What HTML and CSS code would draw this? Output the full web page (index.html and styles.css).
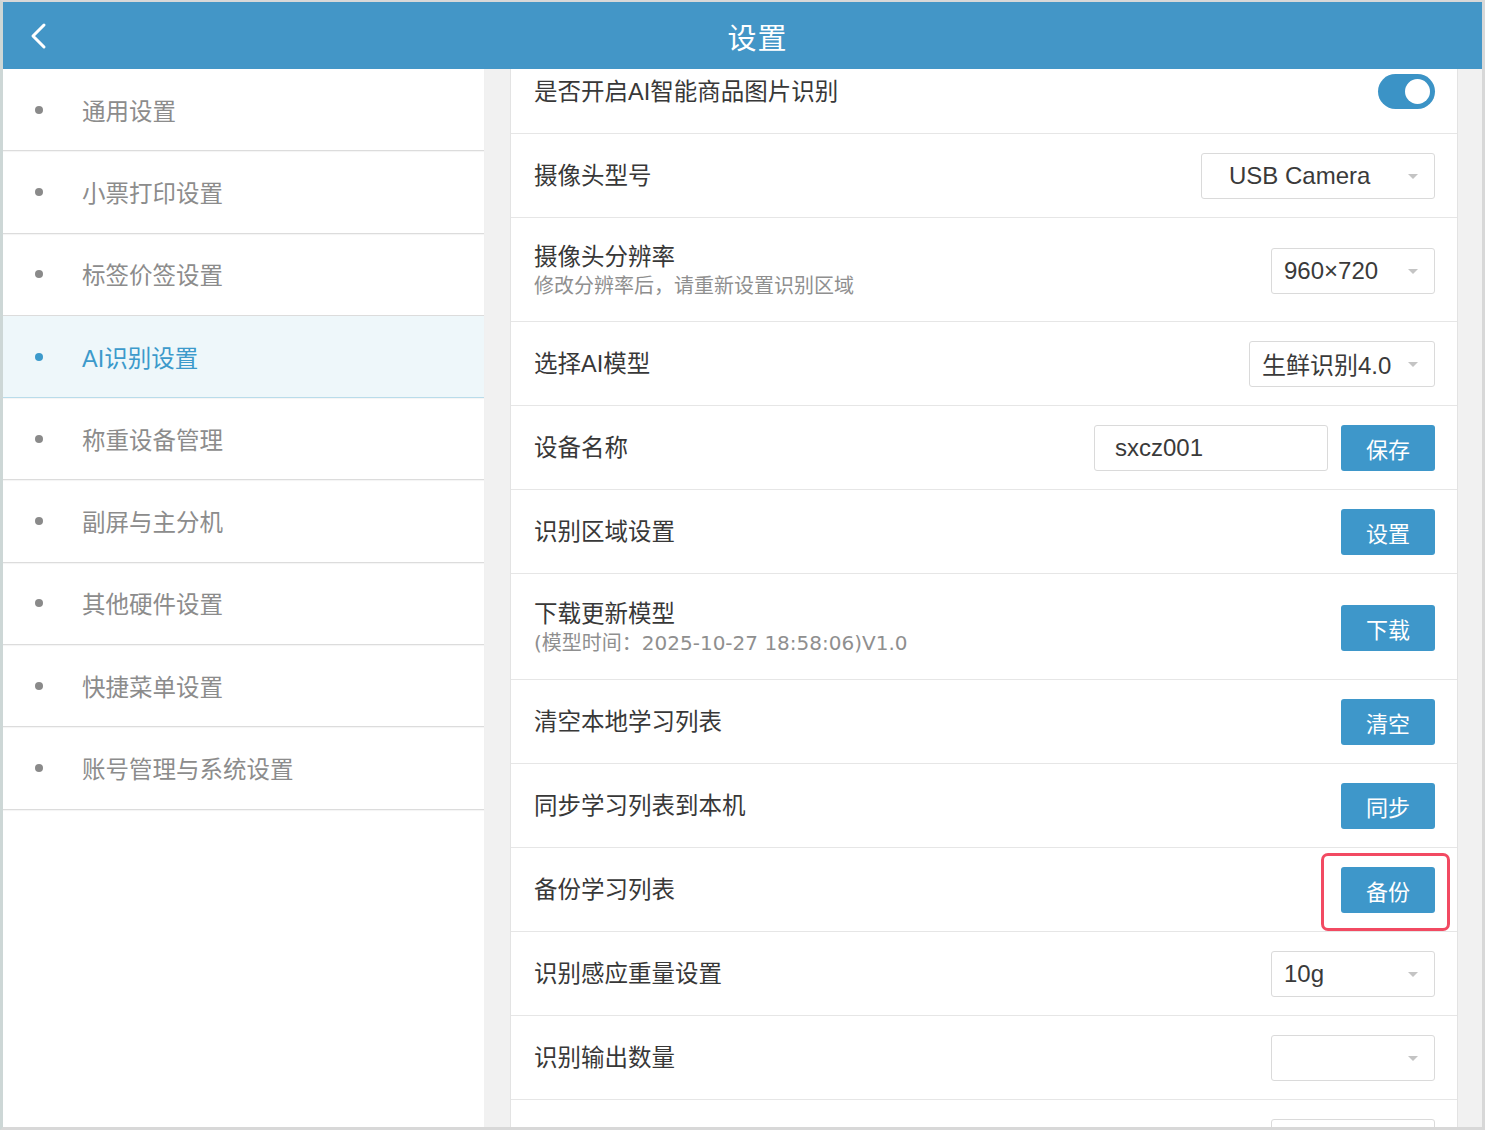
FILE: index.html
```html
<!DOCTYPE html>
<html lang="zh-CN">
<head>
    <meta charset="UTF-8">
    <meta name="viewport" content="width=device-width, initial-scale=1.0">
    <title>设置</title>
    <link rel="stylesheet" href="styles.css">
</head>
<body>
    <div class="frame">
        <header class="topbar">
            <a href="#" class="back">
                <svg width="18" height="28" viewBox="0 0 18 28">
                    <polyline points="15,3 4,14 15,25" fill="none" stroke="#fff" stroke-width="3" stroke-linecap="round" stroke-linejoin="round"/>
                </svg>
            </a>
            <h1>设置</h1>
        </header>

        <div class="main">
            <ul class="side-menu">
                <li><span class="dot"></span>通用设置</li>
                <li><span class="dot"></span>小票打印设置</li>
                <li><span class="dot"></span>标签价签设置</li>
                <li class="active"><span class="dot"></span>AI识别设置</li>
                <li><span class="dot"></span>称重设备管理</li>
                <li><span class="dot"></span>副屏与主分机</li>
                <li><span class="dot"></span>其他硬件设置</li>
                <li><span class="dot"></span>快捷菜单设置</li>
                <li><span class="dot"></span>账号管理与系统设置</li>
            </ul>

            <div class="content">
                <div class="rows">
                    <div class="row">
                        <div class="label">是否开启AI智能商品图片识别</div>
                        <div class="switch on"><span class="knob"></span></div>
                    </div>
                    <div class="row">
                        <div class="label">摄像头型号</div>
                        <div class="select select-wide">USB Camera</div>
                    </div>
                    <div class="row row-two">
                        <div>
                            <div class="label">摄像头分辨率</div>
                            <div class="sub">修改分辨率后，请重新设置识别区域</div>
                        </div>
                        <div class="select">960×720</div>
                    </div>
                    <div class="row">
                        <div class="label">选择AI模型</div>
                        <div class="select select-mid">生鲜识别4.0</div>
                    </div>
                    <div class="row">
                        <div class="label">设备名称</div>
                        <div class="controls">
                            <input class="text-input" type="text" value="sxcz001">
                            <button class="btn">保存</button>
                        </div>
                    </div>
                    <div class="row">
                        <div class="label">识别区域设置</div>
                        <button class="btn">设置</button>
                    </div>
                    <div class="row row-two row-tall">
                        <div>
                            <div class="label">下载更新模型</div>
                            <div class="sub">(模型时间：2025-10-27 18:58:06)V1.0</div>
                        </div>
                        <button class="btn">下载</button>
                    </div>
                    <div class="row">
                        <div class="label">清空本地学习列表</div>
                        <button class="btn">清空</button>
                    </div>
                    <div class="row">
                        <div class="label">同步学习列表到本机</div>
                        <button class="btn">同步</button>
                    </div>
                    <div class="row">
                        <div class="label">备份学习列表</div>
                        <span class="marked"><button class="btn">备份</button></span>
                    </div>
                    <div class="row">
                        <div class="label">识别感应重量设置</div>
                        <div class="select">10g</div>
                    </div>
                    <div class="row">
                        <div class="label">识别输出数量</div>
                        <div class="select"></div>
                    </div>
                    <div class="row">
                        <div class="label"></div>
                        <div class="select"></div>
                    </div>
                </div>
            </div>
        </div>
    </div>
</body>
</html>
```

FILE: styles.css
```css
* {
    box-sizing: border-box;
}

body {
    margin: 0;
    font-family: "Liberation Sans", "Noto Sans CJK SC", sans-serif;
    background-color: #d8d8d8;
}

.frame {
    width: 1485px;
    height: 1130px;
    border-top: 2px solid #d8d8d8;
    border-left: 3px solid #cdd7d6;
    border-right: 3px solid #d8d8d8;
    border-bottom: 3px solid #d8d8d8;
    background-color: #f1f1f1;
    overflow: hidden;
    display: flex;
    flex-direction: column;
}

.topbar {
    height: 67px;
    flex-shrink: 0;
    background-color: #4396c7;
    display: flex;
    align-items: center;
    justify-content: center;
    padding-left: 30px;
    position: relative;
}

.topbar h1 {
    margin: 0;
    color: #fff;
    font-size: 29px;
    font-weight: normal;
    letter-spacing: 1px;
}

.back {
    position: absolute;
    left: 26px;
    top: 20px;
}

.main {
    flex: 1;
    display: flex;
    gap: 26px;
    padding-right: 24px;
    overflow: hidden;
}

/* left menu */
.side-menu {
    width: 481px;
    flex-shrink: 0;
    margin: 0;
    padding: 0;
    list-style: none;
    background-color: #fff;
}

.side-menu li {
    height: 82.3px;
    border-bottom: 1px solid #dcdcdc;
    box-shadow: 0 1px 1px rgba(0, 0, 0, 0.04);
    display: flex;
    align-items: center;
    padding-left: 32px;
    font-size: 23.5px;
    color: #8c8c8c;
}

.side-menu .dot {
    width: 8px;
    height: 8px;
    border-radius: 50%;
    background-color: #8a8a8a;
    margin-right: 39px;
}

.side-menu li.active {
    background-color: #eef7fa;
    border-bottom-color: #b9dcea;
    color: #3c9acb;
}

.side-menu li.active .dot {
    background-color: #3c9acb;
}

/* right content */
.content {
    flex: 1;
    background-color: #fff;
    border-left: 1px solid #e3e3e3;
    border-right: 1px solid #e3e3e3;
    overflow: hidden;
}

.rows {
    margin-top: -19px;
}

.row {
    min-height: 84px;
    border-bottom: 1px solid #e6e6e6;
    display: flex;
    align-items: center;
    justify-content: space-between;
    padding: 0 22px 0 23px;
}

.row-two {
    padding-top: 24px;
    padding-bottom: 21px;
}

.row-tall {
    padding-top: 25px;
    padding-bottom: 22px;
}

.label {
    font-size: 23.5px;
    line-height: 30px;
    color: #383838;
}

.sub {
    font-family: "DejaVu Sans", "Noto Sans CJK SC", sans-serif;
    font-size: 20px;
    line-height: 28px;
    color: #8f8f8f;
}

.switch {
    width: 57px;
    height: 35px;
    border-radius: 18px;
    background-color: #3b93c6;
    display: flex;
    align-items: center;
    justify-content: flex-end;
    padding-right: 5px;
}

.switch .knob {
    width: 25px;
    height: 25px;
    border-radius: 50%;
    background-color: #fff;
}

.select {
    width: 164px;
    height: 46px;
    border: 1px solid #dadada;
    border-radius: 3px;
    padding-left: 12px;
    display: flex;
    align-items: center;
    font-size: 24px;
    color: #3a3a3a;
    position: relative;
}

.select::after {
    content: "";
    position: absolute;
    right: 16px;
    top: 20px;
    border-left: 5px solid transparent;
    border-right: 5px solid transparent;
    border-top: 5px solid #c4c4c4;
}

.select-wide {
    width: 234px;
    padding-left: 27px;
}

.select-mid {
    width: 186px;
}

.controls {
    display: flex;
    gap: 13px;
}

.text-input {
    width: 234px;
    height: 46px;
    border: 1px solid #dadada;
    border-radius: 3px;
    padding: 0 20px;
    font-family: "Liberation Sans", sans-serif;
    font-size: 24px;
    color: #3a3a3a;
    outline: none;
}

.btn {
    width: 94px;
    height: 46px;
    border: none;
    border-radius: 3px;
    background-color: #3e97ca;
    color: #fff;
    font-family: "Noto Sans CJK SC", sans-serif;
    font-size: 22px;
    cursor: pointer;
}

.marked {
    position: relative;
    display: flex;
}

.marked::after {
    content: "";
    position: absolute;
    left: -20px;
    right: -15px;
    top: -14px;
    bottom: -18px;
    border: 3px solid #f24a62;
    border-radius: 7px;
}
```
